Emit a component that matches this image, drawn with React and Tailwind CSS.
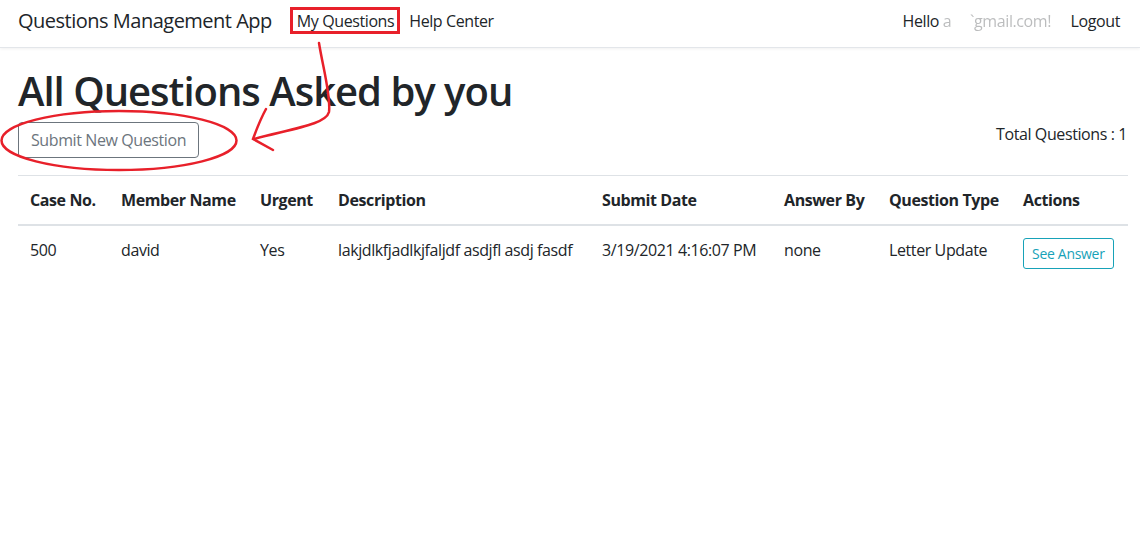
import React from 'react'

const font = { fontFamily: '"Open Sans", "Noto Sans", Arial, sans-serif' }

const questions = [
  {
    caseNo: 500,
    member: 'david',
    urgent: 'Yes',
    description: 'lakjdlkfjadlkjfaljdf asdjfl asdj fasdf',
    date: '3/19/2021 4:16:07 PM',
    answerBy: 'none',
    type: 'Letter Update',
  },
]

// red marker annotations drawn over the screenshot
const Annotations = () => (
  <svg className="pointer-events-none absolute left-0 top-0" width="1140" height="544" fill="none">
    <rect x="291.5" y="8.5" width="107" height="24" stroke="#e8202a" strokeWidth="3" />
    <ellipse cx="119" cy="140.5" rx="117.5" ry="29.5" stroke="#e8202a" strokeWidth="2.5" />
    <path
      d="M319 43 C 323 68, 331 96, 329 112 C 326 124, 296 128, 254 139"
      stroke="#e8202a"
      strokeWidth="2.5"
      strokeLinecap="round"
    />
    <path d="M266 109 C 261 118, 257 128, 253 139 L 273 150" stroke="#e8202a" strokeWidth="2.5" strokeLinecap="round" />
  </svg>
)

export default function App() {
  return (
    <div className="relative min-h-[544px] bg-white text-[#212529]" style={font}>
      <header className="flex h-[48px] items-center justify-between border-b border-[#e3e6ea] pb-[6px] pl-[18px] pr-[20px] shadow-[0_1px_3px_rgba(0,0,0,0.06)]">
        <nav className="flex items-center">
          <span className="mr-[25px] text-[20px] leading-[30px] tracking-[-0.5px]">Questions Management App</span>
          <a className="mr-[15px] text-[16px] tracking-[-0.4px]">My Questions</a>
          <a className="text-[16px] tracking-[-0.4px]">Help Center</a>
        </nav>
        <div className="flex items-center text-[16px] tracking-[-0.4px]">
          <span className="mr-[12px]">
            Hello <span className="opacity-30 blur-[0.6px]">a&nbsp;&nbsp;&nbsp;&nbsp;&nbsp;`gmail.com!&nbsp;&nbsp;</span>
          </span>
          <a>Logout</a>
        </div>
      </header>

      <main className="pl-[18px] pr-[12px]">
        <h1 className="mt-[19px] text-[40px] font-semibold leading-[48px] tracking-[-1px]">All Questions Asked by you</h1>
        <div className="mt-[7px] flex items-start justify-between">
          <button className="h-[36px] rounded-[4px] border border-[#6c757d] px-[12px] text-[16px] tracking-[-0.4px] text-[#6c757d]">
            Submit New Question
          </button>
          <span className="mr-[1px] text-[16px] leading-[24px] tracking-[-0.4px]">Total Questions : 1</span>
        </div>

        <table className="mt-[17px] w-full table-fixed border-collapse text-left text-[16px] tracking-[-0.4px]">
          <colgroup>
            <col className="w-[91px]" />
            <col className="w-[139px]" />
            <col className="w-[78px]" />
            <col className="w-[264px]" />
            <col className="w-[182px]" />
            <col className="w-[105px]" />
            <col className="w-[134px]" />
            <col />
          </colgroup>
          <thead>
            <tr className="border-t border-b-2 border-t-[#dee2e6] border-b-[#dee2e6]">
              {['Case No.', 'Member Name', 'Urgent', 'Description', 'Submit Date', 'Answer By', 'Question Type', 'Actions'].map(h => (
                <th key={h} className="whitespace-nowrap px-[12px] py-[12px] font-bold leading-[24px]">
                  {h}
                </th>
              ))}
            </tr>
          </thead>
          <tbody>
            {questions.map(q => (
              <tr key={q.caseNo}>
                <td className="px-[12px] py-[12px] align-top leading-[24px]">{q.caseNo}</td>
                <td className="px-[12px] py-[12px] align-top leading-[24px]">{q.member}</td>
                <td className="px-[12px] py-[12px] align-top leading-[24px]">{q.urgent}</td>
                <td className="whitespace-nowrap px-[12px] py-[12px] align-top leading-[24px]">{q.description}</td>
                <td className="whitespace-nowrap px-[12px] py-[12px] align-top leading-[24px]">{q.date}</td>
                <td className="px-[12px] py-[12px] align-top leading-[24px]">{q.answerBy}</td>
                <td className="whitespace-nowrap px-[12px] py-[12px] align-top leading-[24px]">{q.type}</td>
                <td className="px-[12px] py-[12px] align-top">
                  <button className="h-[31px] whitespace-nowrap rounded-[3px] border border-[#17a2b8] px-[8px] text-[14px] tracking-[-0.3px] text-[#17a2b8]">
                    See Answer
                  </button>
                </td>
              </tr>
            ))}
          </tbody>
        </table>
      </main>

      <Annotations />
    </div>
  )
}
